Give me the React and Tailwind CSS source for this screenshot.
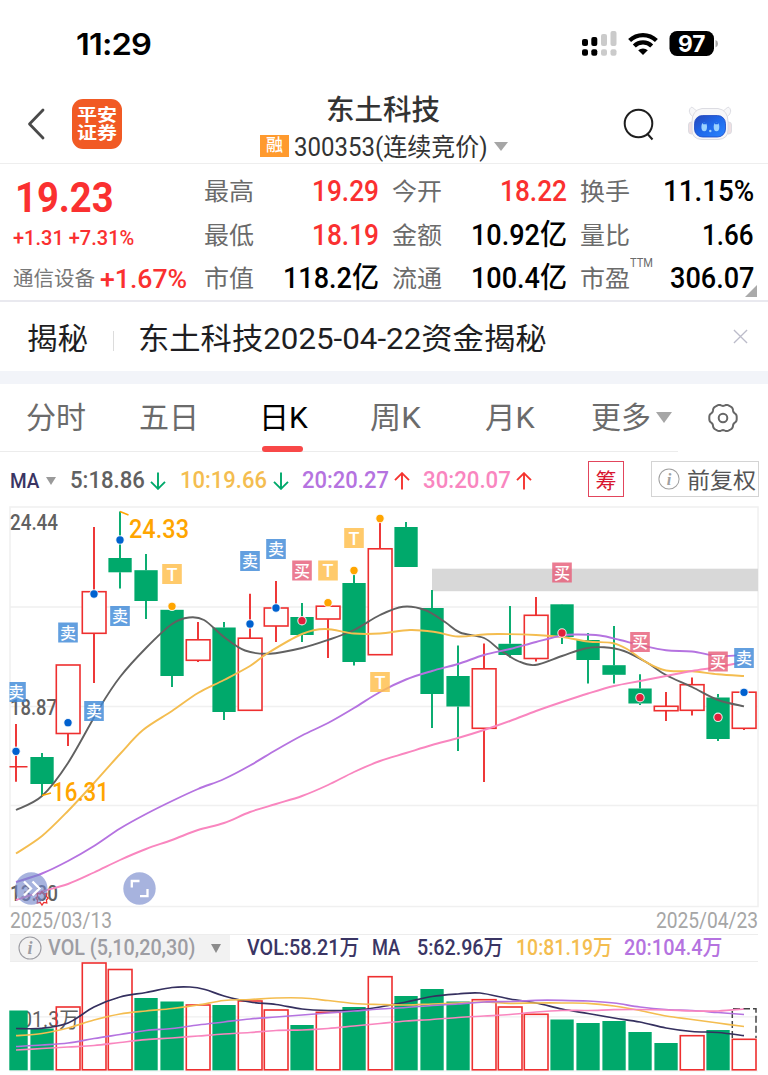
import { useLayoutEffect, useRef } from "react";

const SANS = "font-['Roboto','Noto_Sans_CJK_SC',sans-serif]";

// Condenses or stretches one line of text to the width of its box.
function Fit({ className = "", children }) {
  const box = useRef(null);
  const line = useRef(null);
  useLayoutEffect(() => {
    const ratio = box.current.clientWidth / line.current.offsetWidth;
    line.current.style.transform = `scaleX(${ratio})`;
  }, [children]);
  return (
    <span ref={box} className={`block shrink-0 whitespace-nowrap ${className}`}>
      <span ref={line} className="inline-block origin-left">{children}</span>
    </span>
  );
}

const UP = "#ee2f2f";
const DOWN = "#00a96b";
const cx = (i) => 16 + 26 * i;

// [up?, high, bodyTop, bodyBottom, low]
const candles = [
  [1, 724, 766.7, 766.7, 781.7], [0, 753, 757, 784, 796], [1, 665, 665, 733.5, 746],
  [1, 527, 591.7, 633.3, 683], [0, 511.5, 558, 572.3, 588.5], [0, 554, 570.2, 601, 619],
  [0, 610, 609.8, 676, 687], [1, 622, 639.8, 660.3, 662], [0, 622, 627.5, 712, 720],
  [1, 593.7, 638.2, 710.3, 710.3], [1, 581, 608, 626, 642], [0, 603, 617, 635, 642],
  [1, 603, 606.2, 619, 658], [0, 573, 583, 662, 665.5], [1, 520, 548.8, 654.7, 654.7],
  [0, 522, 527, 567, 567], [0, 590, 608, 694, 728], [0, 645.5, 676, 706.5, 751],
  [1, 643.5, 668.8, 728.3, 782], [0, 606, 643.8, 655, 657.5], [1, 597, 615.3, 658.5, 661.5],
  [0, 604.5, 604.3, 637, 644], [0, 633, 640, 660, 683.5], [0, 626, 665.2, 674.8, 683.5],
  [0, 674.2, 688.5, 703.5, 705], [1, 692, 706.3, 710.7, 721], [1, 677.5, 684.7, 710.3, 715.5],
  [0, 694, 697.5, 739, 741], [1, 692, 692.2, 728.3, 730],
];

// [up?, top]
const volumes = [
  [0, 1010.5], [0, 1028.5], [1, 1007], [1, 963], [1, 969.5], [0, 998], [0, 1001.5], [1, 1005], [0, 1005], [1, 1001],
  [1, 1010], [0, 1025], [1, 1012.3], [0, 1007], [1, 976.7], [0, 996], [0, 989], [0, 1001.5], [1, 999.7], [1, 1007],
  [1, 1014.3], [0, 1019.5], [0, 1023], [0, 1021], [0, 1032], [0, 1043], [1, 1035.7], [0, 1030], [1, 1039.3],
];

const priceLines = [
  ["#616161", [[16,810],[42,796],[68,763],[100,707],[120,677],[146,648],[172,624],[189,617.5],[204,620],[224,637],[245,650.5],[270,653.7],[302,648],[328,640],[354,630],[380,615],[403,606.7],[425,610],[445,622],[460,632.5],[484,638],[500,650],[518,661],[535,665],[562,656],[585,648.5],[604,647.3],[624,651],[646,662],[666,675],[692,687],[718,700],[744,706.3]]],
  ["#f4bd50", [[16,853.5],[42,836],[68,811],[94,783],[120,754],[143,730],[172,711],[198,693],[224,680],[250,666],[268,653],[302,634],[325,629],[354,633.5],[380,633.5],[410,630],[435,632],[458,636.5],[484,634.5],[500,634],[536,635],[562,637],[588,641.5],[612,643],[627,649],[646,662],[666,670.5],[692,671.3],[718,674.3],[744,676]]],
  ["#b573e0", [[16,882],[42,873.5],[68,861],[94,846],[120,828.5],[146,814],[172,801],[198,789],[224,779],[250,765.5],[276,750],[302,735.5],[328,723],[354,708],[380,692],[406,679.5],[432,671],[458,664],[484,655],[510,649],[536,642],[562,635.5],[578,634.5],[600,635.5],[620,640],[640,645],[666,650.3],[692,651.5],[718,656],[744,655]]],
  ["#f986bf", [[16,900],[42,891.5],[68,884],[94,872.5],[120,860],[146,849],[172,840],[198,830],[224,823],[250,812],[276,804],[302,796],[328,785],[354,772],[380,761],[406,753],[432,745],[458,738],[484,730],[510,721],[536,711],[562,702],[588,693.5],[614,686],[640,681],[666,676],[692,671],[718,667],[744,662]]],
];

const volumeLines = [
  ["#35305f", [[16,1028.5],[42,1028.3],[68,1023],[94,1007],[120,997],[146,992.5],[172,987.5],[190,987],[205,989.5],[224,996],[250,1002],[276,1004.5],[302,1009],[328,1010.5],[354,1010.3],[380,1007],[406,1002],[432,996.5],[458,994],[480,993],[510,999],[536,1003],[562,1009],[588,1013.5],[614,1018],[640,1022],[666,1028],[692,1031.5],[718,1032.5],[744,1035.7]]],
  ["#f4bd50", [[16,1035.7],[42,1033.5],[68,1028],[94,1020],[120,1014],[146,1011],[172,1008.5],[198,1005],[224,1000.5],[250,999.5],[276,998],[302,998],[328,1000.5],[354,1003.5],[380,1004.5],[406,1005],[432,1004],[458,1003],[484,1002],[510,1003.3],[536,1003],[562,1003],[588,1003.3],[614,1006],[640,1010.5],[666,1016],[692,1019.5],[718,1023],[744,1026.5]]],
  ["#b573e0", [[16,1046.5],[42,1045],[68,1043],[94,1038.5],[120,1034.5],[146,1030.5],[172,1028.5],[198,1025],[224,1022],[250,1019],[276,1017],[302,1015],[328,1013],[354,1011],[380,1009],[406,1007.5],[432,1005.5],[458,1004],[484,1002],[510,1001.5],[536,1000.3],[562,1000.3],[588,1001],[614,1003],[640,1007],[666,1009.5],[692,1010.5],[718,1012.5],[744,1014.5]]],
  ["#f986bf", [[16,1050],[42,1048.5],[68,1047],[94,1045.5],[120,1042.5],[146,1039.7],[172,1038],[198,1036],[224,1034],[250,1032.5],[276,1030.5],[302,1030],[328,1028.5],[354,1026],[380,1023.5],[406,1021],[432,1019.5],[458,1017.5],[484,1016],[510,1014.5],[536,1012],[562,1010.5],[588,1010.5],[614,1009.7],[640,1009.5],[666,1010],[692,1011],[718,1011],[744,1009]]],
];

const marks = [
  ["卖", 16, 692], ["卖", 68, 632.5], ["卖", 94, 711], ["卖", 120, 616], ["卖", 250, 561], ["卖", 276, 549], ["卖", 744, 658],
  ["买", 302, 570.5], ["买", 562, 572.5], ["买", 640, 642], ["买", 718, 661.5],
  ["T", 172, 574], ["T", 328, 570.5], ["T", 354, 538], ["T", 380, 682],
];
const markColor = { 卖: "#3f8ad8", 买: "#e75f7a", T: "#ffbe4b" };

const dots = [
  ["#0061cf", [[16, 751.3], [68, 722.7], [94, 594], [120, 540], [250, 624], [276, 608], [744, 692.3]]],
  ["#ffa500", [[172, 606.3], [328, 602.7], [354, 570.5], [380, 518.5]]],
  ["#e0203c", [[302, 620.7], [562, 633], [640, 697.7], [718, 717.3]]],
];

function smooth(p) {
  let d = `M${p[0][0]} ${p[0][1]}`;
  for (let i = 0; i < p.length - 1; i++) {
    const a = p[i - 1] || p[i], b = p[i], c = p[i + 1], e = p[i + 2] || c;
    d += `C${b[0] + (c[0] - a[0]) / 6} ${b[1] + (c[1] - a[1]) / 6} ${c[0] - (e[0] - b[0]) / 6} ${c[1] - (e[1] - b[1]) / 6} ${c[0]} ${c[1]}`;
  }
  return d;
}

const gearPath = Array.from({ length: 120 }, (_, i) => {
  const a = (i * Math.PI) / 60;
  const r = 13.2 + 0.8 * Math.cos(6 * a) - 0.3 * Math.cos(12 * a);
  return `${i ? "L" : "M"}${(16 + r * Math.cos(a)).toFixed(2)} ${(16 + r * Math.sin(a)).toFixed(2)}`;
}).join("") + "Z";

const Caret = ({ className }) => (
  <svg viewBox="0 0 10 7" preserveAspectRatio="none" className={`shrink-0 ${className}`}><path d="M0 0H10L5 7Z" fill="currentColor" /></svg>
);

const Arrow = ({ up }) => (
  <svg viewBox="0 0 16 18" className={`h-[18px] w-4 shrink-0 ${up ? "text-[#f5332f]" : "rotate-180 text-[#00a96b]"}`}>
    <path d="M8 17.5V1.5M1 8.2 8 1.2 15 8.2" fill="none" stroke="currentColor" strokeWidth="1.9" />
  </svg>
);

const Info = ({ className }) => (
  <svg viewBox="0 0 24 24" className={`shrink-0 ${className}`}>
    <circle cx="12" cy="12" r="11" fill="none" stroke="currentColor" strokeWidth="1.1" />
    <text x="12" y="18" textAnchor="middle" fontFamily="Liberation Serif, serif" fontStyle="italic" fontWeight="700" fontSize="18" fill="currentColor">i</text>
  </svg>
);

function StatusBar() {
  return (
    <div className="flex h-[88px] items-center pl-[76px] pr-[50px]">
      <Fit className="w-[75px] font-['Inter',sans-serif] text-[30.5px] font-semibold leading-[88px] tracking-[-0.8px] text-black">11:29</Fit>
      <svg viewBox="581 30 137 28" className="ml-auto h-7 w-[137px]">
        {[[582, 39, 7], [591.3, 37, 9], [601, 34, 12], [610.5, 31, 15]].map(([x, y, h], i) => (
          <g key={x} fill={i < 2 ? "#000" : "#cbcbcb"}>
            <rect x={x} y={y} width="6" height={h} rx="2" />
            <rect x={x} y="49.3" width="6" height="6.5" rx="2" />
          </g>
        ))}
        <g fill="none" stroke="#000" strokeWidth="4.2">
          <path d="M629.6 40.6a19.2 19.2 0 0 1 26.8 0" />
          <path d="M634.3 46a12.4 12.4 0 0 1 17.4 0" />
        </g>
        <path d="M638.2 50.3a7 7 0 0 1 9.6 0L643 55Z" fill="#000" />
        <rect x="669.5" y="31" width="44.5" height="25" rx="7.5" fill="#000" />
        <path d="M715.500 40q2.500.8 2.500 3.700T715.500 47.4Z" fill="#aaa" />
        <text x="691.8" y="51.8" textAnchor="middle" textLength="27.500" lengthAdjust="spacingAndGlyphs" fontFamily="Inter, sans-serif" fontWeight="700" fontSize="22.5" fill="#fff">97</text>
      </svg>
    </div>
  );
}

function Robot() {
  return (
    <svg viewBox="0 0 46 38" className="h-[38px] w-[46px]">
      <defs>
        <linearGradient id="face" x1="0" y1="0" x2="1" y2="1"><stop offset="0" stopColor="#2746b8" /><stop offset=".45" stopColor="#1f66e8" /><stop offset="1" stopColor="#2a86ff" /></linearGradient>
      </defs>
      <g fill="#f7f7f9" stroke="#dcdce2" strokeWidth="1">
        <path d="M8 13C2 10 1 5 4 2.500 6 1.500 7 5 11 6ZM38 13C44 10 45 5 42 2.500 40 1.500 39 5 35 6Z" />
        <rect x="1.500" y="17" width="6" height="12" rx="3" fill="#efdfe2" />
        <rect x="38.500" y="17" width="6" height="12" rx="3" fill="#efdfe2" />
        <path d="M15 3.500H31Q41 5 41 17V25Q41 34 31 34.500H15Q5 34 5 25V17Q5 5 15 3.500Z" />
      </g>
      <rect x="7.500" y="10.500" width="31" height="21.500" rx="8" fill="url(#face)" stroke="#1c47c4" strokeWidth=".8" />
      <ellipse cx="17.200" cy="22" rx="2.800" ry="4.200" fill="#9cd2ff" />
      <ellipse cx="29.500" cy="22" rx="2.800" ry="4.200" fill="#9cd2ff" />
      <path d="M16 18.500h3M28 18.500h3" stroke="#1f66e8" strokeWidth="1.500" />
      <circle cx="23.300" cy="26" r="1.200" fill="#9cd2ff" />
    </svg>
  );
}

function Header() {
  return (
    <header className="flex h-19 items-start border-b border-[#eeeeee] pl-[27px] pr-[34px]">
      <svg viewBox="0 0 18 32" className="mt-5 h-8 w-[18px]"><path d="M16 2 2.500 16 16 30" fill="none" stroke="#4a4a4a" strokeWidth="2.800" strokeLinecap="round" strokeLinejoin="round" /></svg>
      <div className="ml-[27px] mt-[11px] flex h-[50px] w-[50px] flex-col items-center justify-center rounded-[11px] bg-[#f15a24] text-[17.500px] font-bold leading-[18px] text-white">
        <Fit className="w-10">平安</Fit><Fit className="w-10">证券</Fit>
      </div>
      <div className="ml-[138px] flex w-[248px] flex-col items-center pt-[2px] text-[#333333]">
        <Fit className="ml-[-3px] h-10 w-[114px] text-[28px] font-medium leading-[42px]">东土科技</Fit>
        <div className="flex h-8 items-center">
          <span className="flex h-[22px] w-[29px] items-center justify-center bg-[#ff9a2e] text-[17px] font-medium text-white">融</span>
          <Fit className="ml-[5px] mt-1 w-[194px] text-[25px] leading-9">300353(连续竞价)</Fit>
          <Caret className="ml-[6px] h-[9px] w-[14px] text-[#a6a6a6]" />
        </div>
      </div>
      <svg viewBox="0 0 32 34" className="ml-[115px] mt-5 h-[34px] w-8"><circle cx="15.500" cy="15.500" r="13.800" fill="none" stroke="#1e1e1e" strokeWidth="2" /><path d="M24.500 26 29.500 31.500" stroke="#1e1e1e" strokeWidth="2" /></svg>
      <div className="ml-[32px] mt-[17px]"><Robot /></div>
    </header>
  );
}

const Label = ({ children }) => <Fit className="ml-[-1px] w-[50px] text-[24px] leading-[46px] text-[#6b6b6b]">{children}</Fit>;

function Quote() {
  return (
    <section className="flex h-[138px] border-b-2 border-[#e9e9ef] pl-[13px]">
      <div className="w-[192px] text-[#fa3030]">
        <Fit className="ml-[2px] mt-2 h-[49px] w-[99px] text-[42px] font-bold leading-[52px]">19.23</Fit>
        <Fit className="h-9 w-[121px] text-[21px] font-medium leading-[35px]">+1.31 +7.31%</Fit>
        <div className="flex h-11 items-center">
          <Fit className="w-[82px] text-[20px] leading-[42px] text-[#777777]">通信设备</Fit>
          <Fit className="ml-[5px] w-[87px] text-[26px] font-medium leading-10">+1.67%</Fit>
        </div>
      </div>
      <div className="grid w-[549px] grid-cols-[174px_188px_187px] grid-rows-[44px_43px_44px] gap-x-0 pt-[5px] leading-[44px] text-black">
        <div className="flex justify-between"><Label>最高</Label><Fit className="w-[67px] text-[29px] font-medium text-[#fa3030]">19.29</Fit></div>
        <div className="flex justify-between pl-[14px]"><Label>今开</Label><Fit className="w-[67px] text-[29px] font-medium text-[#fa3030]">18.22</Fit></div>
        <div className="flex justify-between pl-[14px]"><Label>换手</Label><Fit className="w-[91px] text-[29px] font-medium">11.15%</Fit></div>
        <div className="flex justify-between"><Label>最低</Label><Fit className="w-[67px] text-[29px] font-medium text-[#fa3030]">18.19</Fit></div>
        <div className="flex justify-between pl-[14px]"><Label>金额</Label><Fit className="w-[96px] text-[29px] font-medium leading-[45px]">10.92亿</Fit></div>
        <div className="flex justify-between pl-[14px]"><Label>量比</Label><Fit className="w-[52px] text-[29px] font-medium">1.66</Fit></div>
        <div className="flex justify-between"><Label>市值</Label><Fit className="w-[96px] text-[29px] font-medium leading-[45px]">118.2亿</Fit></div>
        <div className="flex justify-between pl-[14px]"><Label>流通</Label><Fit className="w-[96px] text-[29px] font-medium leading-[45px]">100.4亿</Fit></div>
        <div className="relative flex pl-[14px]">
          <Label>市盈</Label>
          <Fit className="h-5 w-[23px] text-[12.500px] leading-[14px] text-[#6b6b6b]">TTM</Fit>
          <Fit className="ml-auto w-[84px] text-[29px] font-medium">306.07</Fit>
          <svg viewBox="0 0 12 12" className="absolute -right-[3px] bottom-[3px] h-3 w-3"><path d="M12 0V12H0Z" fill="#aaa" /></svg>
        </div>
      </div>
    </section>
  );
}

function News() {
  return (
    <section className="flex h-[82px] items-center border-b-[13px] border-[#f2f4f9] pl-[27px] pr-5 text-[30px] text-[#1e1e22]">
      <Fit className="mt-[3px] w-[61px] leading-[69px]">揭秘</Fit>
      <span className="ml-[25px] mt-2 h-5 w-px bg-[#dcdcdc]" />
      <Fit className="ml-[24px] mt-[3px] w-[408px] leading-[69px]">东土科技2025-04-22资金揭秘</Fit>
      <svg viewBox="0 0 16 16" className="ml-auto h-[15px] w-[15px]"><path d="M1 1 15 15M15 1 1 15" stroke="#bcbcca" strokeWidth="1.400" /></svg>
    </section>
  );
}

function Tabs() {
  return (
    <nav className="flex h-[68px] items-start text-[30px] leading-[67px] text-[#6b6b6b]">
      <div className="flex h-[68px] w-[678px] border-b border-[#ececec] pl-[26px]">
        <Fit className="w-[60px]">分时</Fit>
        <Fit className="ml-[53px] w-[60px]">五日</Fit>
        <div className="relative ml-[60px] text-black">
          <Fit className="w-[49px]">日K</Fit>
          <span className="absolute left-[3px] top-[62px] h-[6px] w-[41px] rounded-[3px] bg-[#f84848]" />
        </div>
        <Fit className="ml-[62px] w-[51px]">周K</Fit>
        <Fit className="ml-[64px] w-[50px]">月K</Fit>
        <Fit className="ml-[56px] w-[60px]">更多</Fit>
        <Caret className="ml-[5px] mt-7 h-[11px] w-4 text-[#a6a6a6]" />
      </div>
      <svg viewBox="0 0 32 32" className="ml-[28.500px] mt-[17.500px] h-8 w-8" fill="none" stroke="#666" strokeWidth="2"><path d={gearPath} /><circle cx="16" cy="16" r="4.300" /></svg>
    </nav>
  );
}

function Averages() {
  return (
    <div className="flex h-[54px] items-center pb-[1px] pl-[10px] pr-[9px] pt-[5px] text-[23px] leading-[48px]">
      <Fit className="w-[29px] text-[21px] font-medium text-[#3a3564]">MA</Fit>
      <Caret className="ml-[7px] h-2 w-[10px] text-[#9a9a9a]" />
      <Fit className="ml-[14px] w-[75px] font-medium text-[#616161]">5:18.86</Fit>
      <span className="ml-[5px]"><Arrow /></span>
      <Fit className="ml-[14px] w-[87px] font-medium text-[#f4bd50]">10:19.66</Fit>
      <span className="ml-[6px]"><Arrow /></span>
      <Fit className="ml-[13px] w-[87px] font-medium text-[#b573e0]">20:20.27</Fit>
      <span className="ml-[5px]"><Arrow up /></span>
      <Fit className="ml-[13px] w-[88px] font-medium text-[#f986bf]">30:20.07</Fit>
      <span className="ml-[5px]"><Arrow up /></span>
      <span className="ml-auto mt-[-5px] flex h-9 w-9 items-center justify-center border border-[#e2455c] pt-1 text-[21px] text-[#d8152f]">筹</span>
      <span className="ml-[27px] mt-[-5px] flex h-9 w-[108px] items-center border border-[#d4d4d4] pl-[6px] text-[#555]">
        <Info className="h-[22px] w-[22px] text-[#a0a0a0]" />
        <Fit className="ml-[7px] mt-1 w-[69px] text-[22px] leading-9">前复权</Fit>
      </span>
    </div>
  );
}

function PriceChart() {
  return (
    <svg viewBox="0 506 768 402" className="block h-[402px] w-[768px]" fontFamily="Roboto, 'Noto Sans CJK SC', sans-serif">
      <clipPath id="plot"><rect x="9.500" y="500" width="749" height="410" /></clipPath>
      <g stroke="#f0f0f0" strokeWidth="1.500" fill="none">
        <rect x="10" y="507" width="748" height="399.500" />
        <path d="M10 607H758M10 706.500H758M10 805.500H758" />
      </g>
      <rect x="432" y="568.700" width="326" height="22.500" fill="#d8d8d8" />
      <g fontSize="22" fill="#616161" fontWeight="500">
        <text x="10" y="529.500" textLength="48" lengthAdjust="spacingAndGlyphs">24.44</text>
        <text x="10" y="715" textLength="47" lengthAdjust="spacingAndGlyphs">18.87</text>
        <text x="10" y="900.500" textLength="48" lengthAdjust="spacingAndGlyphs">13.30</text>
      </g>
      <g clipPath="url(#plot)">
        {candles.map(([up, high, top, bottom, low], i) => {
          const x = cx(i);
          const c = up ? UP : DOWN;
          return (
            <g key={i}>
              <path d={`M${x} ${high}V${top}M${x} ${bottom}V${low}`} stroke={c} strokeWidth="1.900" />
              {top === bottom ? <path d={`M9 ${top}H27.500`} stroke={c} strokeWidth="1.600" />
                : up ? <rect x={x - 11.7} y={top} width="23.700" height={bottom - top} fill="#fff" stroke={c} strokeWidth="1.600" />
                : <rect x={x - 11.6} y={top} width="23.300" height={bottom - top} fill={c} />}
            </g>
          );
        })}
        {priceLines.map(([c, p]) => <path key={c} d={smooth(p)} fill="none" stroke={c} strokeWidth="1.900" />)}
        {dots.map(([c, list]) => list.map(([x, y]) => <circle key={`${x}-${y}`} cx={x} cy={y} r="4.200" fill={c} stroke="#fff" strokeOpacity=".85" strokeWidth="1.100" />))}
        {marks.map(([label, x, y]) => (
          <g key={`${x}-${y}`}>
            <rect x={x - 9.8} y={y - 10} width="19.600" height="20" fill={markColor[label]} opacity=".82" />
            <text x={x} y={y + (label === "T" ? 6.5 : 6)} textAnchor="middle" fontSize={label === "T" ? 18 : 16} fontWeight="500" fill="#fff">{label}</text>
          </g>
        ))}
      </g>
      <path d="M120 511.500 128.500 515M42 795.500 51 793" stroke="#ffa500" strokeWidth="1.500" fill="none" />
      <g fontSize="26" fill="#ffa500" fontWeight="500">
        <text x="129" y="537.500" textLength="60" lengthAdjust="spacingAndGlyphs">24.33</text>
        <text x="52" y="801" textLength="57" lengthAdjust="spacingAndGlyphs">16.31</text>
      </g>
      <path d="M42 891.500l1.800 2.600 3-.8-.4 3.100 1.800 1.600-1.800 2 .4 3-3-.6-1.800 2.600-1.800-2.600-3 .6.4-3-1.800-2 1.800-1.600-.4-3.100 3 .8Z" fill="none" stroke={UP} strokeWidth="1.300" />
      <circle cx="31.300" cy="888.500" r="16.200" fill="#7486ca" opacity=".63" />
      <circle cx="139.500" cy="888.500" r="16.200" fill="#7486ca" opacity=".63" />
      <g fill="none" stroke="#fff" strokeWidth="2.300">
        <path d="M24 881.500 31 888.500 24 895.500M32.500 881.500 39.500 888.500 32.500 895.500" />
        <path d="M131.800 887.500V881H139.500M140 896.200H147.500V889" />
      </g>
    </svg>
  );
}

function VolumeHeader() {
  return (
    <div className="ml-[10px] flex h-7 w-[748px] items-center border-y border-[#ededed] text-[21.500px] leading-[26px]">
      <div className="flex h-[26px] w-[220px] items-center bg-[#f2f2f2] pl-2 text-[#9d9da3]">
        <Info className="h-6 w-6" />
        <Fit className="ml-[6px] w-[147px] font-medium">VOL (5,10,20,30)</Fit>
        <Caret className="ml-4 h-[9px] w-[10px] text-[#8c8c8c]" />
      </div>
      <Fit className="ml-[17px] w-[112px] font-medium text-[#3a3564]">VOL:58.21万</Fit>
      <Fit className="ml-[13px] w-[28px] font-medium text-[#3a3564]">MA</Fit>
      <Fit className="ml-[17px] w-[86px] font-medium text-[#3a3564]">5:62.96万</Fit>
      <Fit className="ml-[13px] w-[96px] font-medium text-[#f4bd50]">10:81.19万</Fit>
      <Fit className="ml-[12px] w-[98px] font-medium text-[#b573e0]">20:104.4万</Fit>
    </div>
  );
}

function VolumeChart() {
  return (
    <svg viewBox="0 962 768 113" className="block h-[113px] w-[768px]" fontFamily="Roboto, 'Noto Sans CJK SC', sans-serif">
      <clipPath id="vol"><rect x="9.300" y="961" width="749" height="114" /></clipPath>
      <path d="M10 1016.800H758M10 1071H758" stroke="#efefef" strokeWidth="1.200" />
      <text x="10" y="1026.500" fontSize="22" fill="#616161" textLength="69" lengthAdjust="spacingAndGlyphs">201.3万</text>
      <g clipPath="url(#vol)">
        {volumes.map(([up, top], i) => up
          ? <rect key={i} x={cx(i) - 11.7} y={top} width="23.700" height={1069.8 - top} fill="none" stroke={UP} strokeWidth="1.600" />
          : <rect key={i} x={cx(i) - 11.6} y={top} width="23.300" height={1070.3 - top} fill={DOWN} />)}
        <path d="M732.300 1038V1008.700H756V1038" fill="none" stroke="#444" strokeWidth="1.500" strokeDasharray="7 3" />
        {volumeLines.map(([c, p]) => <path key={c} d={smooth(p)} fill="none" stroke={c} strokeWidth="1.700" />)}
      </g>
    </svg>
  );
}

export default function App() {
  return (
    <main className={`flex h-[1075px] w-[768px] flex-col overflow-hidden bg-white ${SANS}`}>
      <StatusBar />
      <Header />
      <Quote />
      <News />
      <Tabs />
      <Averages />
      <PriceChart />
      <div className="flex h-[26px] items-center justify-between pl-[10px] pr-[10px] text-[22px] leading-[26px] text-[#a6a6a6]">
        <Fit className="w-[102px]">2025/03/13</Fit>
        <Fit className="w-[102px]">2025/04/23</Fit>
      </div>
      <VolumeHeader />
      <VolumeChart />
    </main>
  );
}
